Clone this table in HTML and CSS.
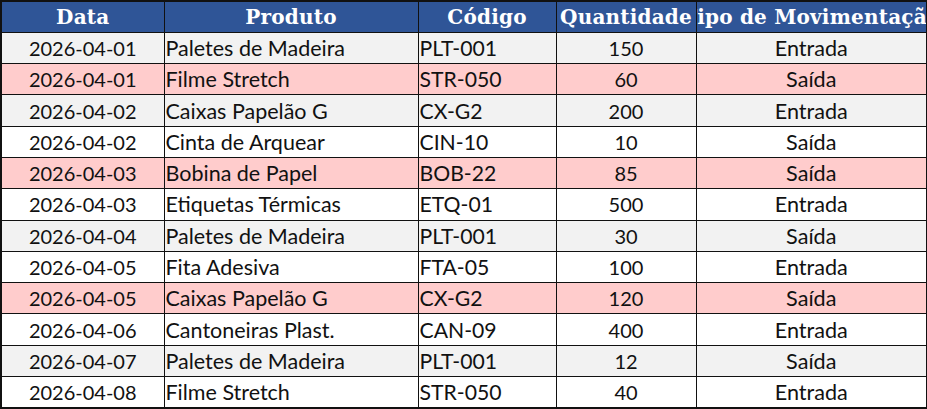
FILE: index.html
```html
<!DOCTYPE html>
<html lang="pt">
<head>
<meta charset="utf-8">
<title>Movimentações</title>
<link rel="stylesheet" href="styles.css">
</head>
<body>
<table class="sheet">
  <colgroup>
    <col class="c-data"><col class="c-prod"><col class="c-cod"><col class="c-qtd"><col class="c-tipo">
  </colgroup>
  <thead>
    <tr>
      <th><div class="hd">Data</div></th>
      <th><div class="hd">Produto</div></th>
      <th><div class="hd">Código</div></th>
      <th><div class="hd">Quantidade</div></th>
      <th><div class="hd">Tipo de Movimentação</div></th>
    </tr>
  </thead>
  <tbody>
    <tr class="gray"><td class="num">2026-04-01</td><td class="txt">Paletes de Madeira</td><td class="cod">PLT-001</td><td class="num">150</td><td class="tipo">Entrada</td></tr>
    <tr class="pink"><td class="num">2026-04-01</td><td class="txt">Filme Stretch</td><td class="cod">STR-050</td><td class="num">60</td><td class="tipo">Saída</td></tr>
    <tr class="gray"><td class="num">2026-04-02</td><td class="txt">Caixas Papelão G</td><td class="cod">CX-G2</td><td class="num">200</td><td class="tipo">Entrada</td></tr>
    <tr class="white"><td class="num">2026-04-02</td><td class="txt">Cinta de Arquear</td><td class="cod">CIN-10</td><td class="num">10</td><td class="tipo">Saída</td></tr>
    <tr class="pink"><td class="num">2026-04-03</td><td class="txt">Bobina de Papel</td><td class="cod">BOB-22</td><td class="num">85</td><td class="tipo">Saída</td></tr>
    <tr class="white"><td class="num">2026-04-03</td><td class="txt">Etiquetas Térmicas</td><td class="cod">ETQ-01</td><td class="num">500</td><td class="tipo">Entrada</td></tr>
    <tr class="gray"><td class="num">2026-04-04</td><td class="txt">Paletes de Madeira</td><td class="cod">PLT-001</td><td class="num">30</td><td class="tipo">Saída</td></tr>
    <tr class="white"><td class="num">2026-04-05</td><td class="txt">Fita Adesiva</td><td class="cod">FTA-05</td><td class="num">100</td><td class="tipo">Entrada</td></tr>
    <tr class="pink"><td class="num">2026-04-05</td><td class="txt">Caixas Papelão G</td><td class="cod">CX-G2</td><td class="num">120</td><td class="tipo">Saída</td></tr>
    <tr class="white"><td class="num">2026-04-06</td><td class="txt">Cantoneiras Plast.</td><td class="cod">CAN-09</td><td class="num">400</td><td class="tipo">Entrada</td></tr>
    <tr class="gray"><td class="num">2026-04-07</td><td class="txt">Paletes de Madeira</td><td class="cod">PLT-001</td><td class="num">12</td><td class="tipo">Saída</td></tr>
    <tr class="white"><td class="num">2026-04-08</td><td class="txt">Filme Stretch</td><td class="cod">STR-050</td><td class="num">40</td><td class="tipo">Entrada</td></tr>
  </tbody>
</table>
</body>
</html>
```

FILE: styles.css
```css
html, body {
  margin: 0;
  padding: 0;
  background: #ffffff;
}

.sheet {
  border-collapse: collapse;
  table-layout: fixed;
  width: 926px;
  border: 2px solid #111111;
  font-family: Lato, "Liberation Sans", sans-serif;
  font-size: 20px;
  color: #111111;
}

.c-data { width: 163px; }
.c-prod { width: 254px; }
.c-cod  { width: 138px; }
.c-qtd  { width: 140px; }
.c-tipo { width: 231px; }

.sheet tr {
  height: 31.3px;
}

.sheet th,
.sheet td {
  border: 1px solid #111111;
  padding: 0 1px;
  white-space: nowrap;
  overflow: hidden;
  text-align: left;
  vertical-align: middle;
  line-height: 24px;
}

.sheet th {
  background: #2f5597;
  color: #ffffff;
  padding: 0;
  font-family: "DejaVu Serif", "Liberation Serif", serif;
  font-weight: bold;
  font-size: 20px;
}

.hd {
  display: flex;
  justify-content: center;
  white-space: nowrap;
  overflow: hidden;
  letter-spacing: 0.2px;
}

.sheet td.num {
  text-align: center;
  font-size: 20px;
}

.sheet td.txt {
  font-size: 21.5px;
}

.sheet td.cod {
  font-size: 21.2px;
}

.sheet td.tipo {
  text-align: center;
  font-size: 21.6px;
}

.gray td { background: #f2f2f2; }
.white td { background: #ffffff; }
.pink td { background: #ffcccc; }
```
